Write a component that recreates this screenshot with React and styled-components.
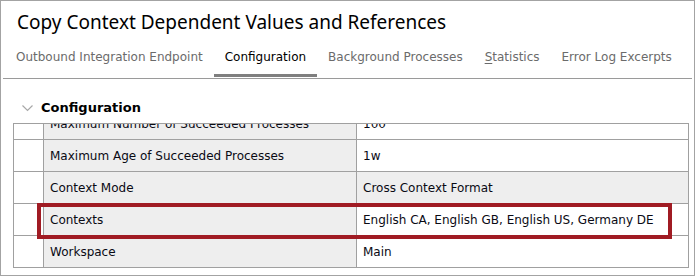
import React from "react";
import styled, { createGlobalStyle } from "styled-components";

const GlobalStyle = createGlobalStyle`
  html, body {
    margin: 0;
    padding: 0;
    background: #ffffff;
  }
  body {
    font-family: "DejaVu Sans", "Liberation Sans", sans-serif;
  }
`;

const Frame = styled.div`
  width: 695px;
  height: 276px;
  box-sizing: border-box;
  border: 1px solid #a3a3a3;
  background: #ffffff;
  overflow: hidden;
`;

const Title = styled.h1`
  margin: 0;
  padding: 10px 0 0 16px;
  height: 33px;
  box-sizing: border-box;
  font-family: "Noto Sans", "DejaVu Sans", sans-serif;
  font-size: 19px;
  font-weight: normal;
  color: #000000;
  line-height: 22px;
`;

const TabBar = styled.div`
  display: flex;
  margin: 0 2px;
  padding-left: 2px;
  height: 45px;
  border-bottom: 1px solid #9a9a9a;
  box-sizing: border-box;
`;

const Tab = styled.div`
  position: relative;
  padding: 15px 11px 0 11px;
  font-size: 12px;
  line-height: 16px;
  color: ${(p) => (p.$active ? "#000000" : "#6b6b6b")};
  white-space: nowrap;
  &::after {
    content: "";
    display: ${(p) => (p.$active ? "block" : "none")};
    position: absolute;
    left: 0;
    right: 0;
    bottom: 1px;
    height: 3px;
    background: #7f7f7f;
  }
  u {
    text-decoration: underline;
    text-underline-offset: 2px;
  }
`;

const SectionHeader = styled.div`
  padding: 21px 0 0 21px;
  height: 44px;
  box-sizing: border-box;
  font-size: 13px;
  line-height: 16px;
  font-weight: bold;
  color: #000000;
`;

const HeaderLine = styled.div`
  display: flex;
  align-items: center;
  gap: 8px;
  height: 16px;
`;

const Chevron = () => (
  <svg width="11" height="7" viewBox="0 0 11 7">
    <polyline
      points="0.5,0.5 5.5,5.5 10.5,0.5"
      fill="none"
      stroke="#a8a8a8"
      strokeWidth="1.2"
    />
  </svg>
);

const TableArea = styled.div`
  position: relative;
  margin: 0 5px 0 12px;
`;

const Viewport = styled.div`
  height: 145px;
  box-sizing: border-box;
  border: 1px solid #a0a0a0;
  overflow: hidden;
`;

const Rows = styled.div`
  margin-top: -16px;
`;

const Row = styled.div`
  display: grid;
  grid-template-columns: 30px 313px 1fr;
  height: 32px;
  box-sizing: border-box;
  border-bottom: 1px solid #a0a0a0;
`;

const Cell = styled.div`
  display: flex;
  align-items: center;
  padding-left: 6px;
  box-sizing: border-box;
  font-size: 12px;
  color: #0a0a14;
  white-space: nowrap;
  overflow: hidden;
  background: ${(p) => (p.$shaded ? "#eeeeee" : "#ffffff")};
  border-right: ${(p) => (p.$last ? "none" : "1px solid #a0a0a0")};
`;

const Highlight = styled.div`
  position: absolute;
  left: 24px;
  top: 80px;
  width: 635px;
  height: 36px;
  box-sizing: border-box;
  border: 4px solid #a01b23;
  pointer-events: none;
`;

const tabs = [
  { label: "Outbound Integration Endpoint" },
  { label: "Configuration", active: true },
  { label: "Background Processes" },
  { label: "Statistics", key: "S" },
  { label: "Error Log Excerpts" },
];

const rows = [
  { name: "Maximum Number of Succeeded Processes", value: "100" },
  { name: "Maximum Age of Succeeded Processes", value: "1w" },
  { name: "Context Mode", value: "Cross Context Format", shaded: true },
  { name: "Contexts", value: "English CA, English GB, English US, Germany DE" },
  { name: "Workspace", value: "Main" },
];

export default function App() {
  return (
    <>
      <GlobalStyle />
      <Frame>
        <Title>Copy Context Dependent Values and References</Title>
        <TabBar>
          {tabs.map((tab) => (
            <Tab key={tab.label} $active={tab.active}>
              {tab.key ? (
                <>
                  <u>{tab.key}</u>
                  {tab.label.slice(1)}
                </>
              ) : (
                tab.label
              )}
            </Tab>
          ))}
        </TabBar>
        <SectionHeader>
          <HeaderLine>
            <Chevron />
            <span>Configuration</span>
          </HeaderLine>
        </SectionHeader>
        <TableArea>
          <Viewport>
            <Rows>
              {rows.map((row) => (
                <Row key={row.name}>
                  <Cell />
                  <Cell $shaded>{row.name}</Cell>
                  <Cell $last $shaded={row.shaded}>
                    {row.value}
                  </Cell>
                </Row>
              ))}
            </Rows>
          </Viewport>
          <Highlight />
        </TableArea>
      </Frame>
    </>
  );
}
